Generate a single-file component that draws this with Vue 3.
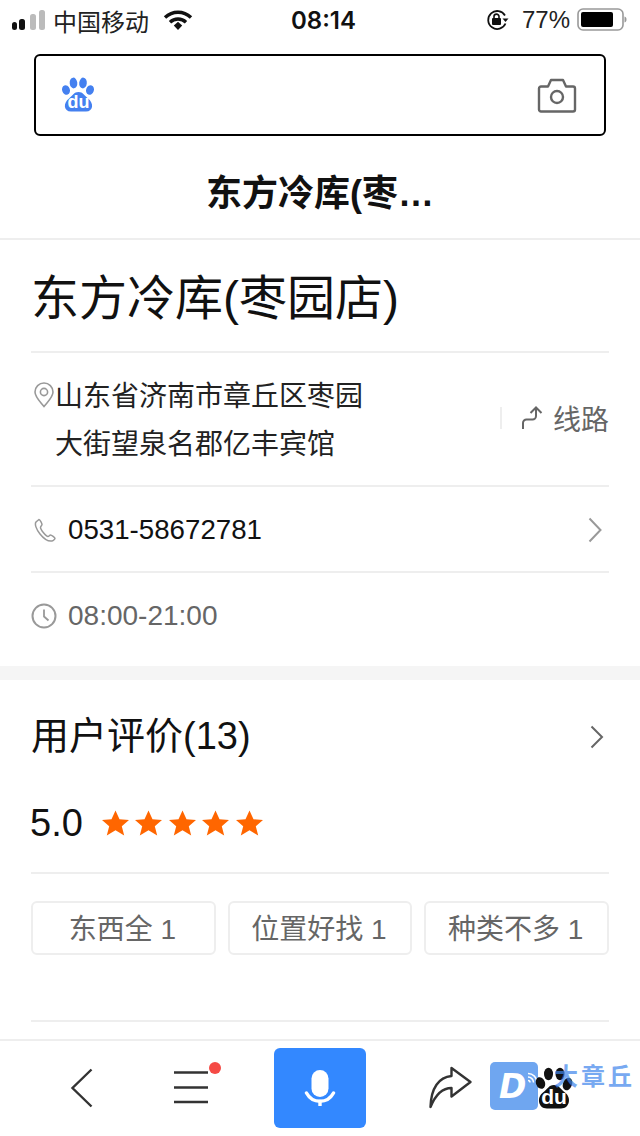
<script setup>
const tags = ['东西全 1', '位置好找 1', '种类不多 1']
const stars = [1, 2, 3, 4, 5]
</script>

<template>
  <div class="page">
    <header class="status">
      <div class="st-left">
        <svg class="signal" width="34" height="22" viewBox="0 0 34 22">
          <rect x="0" y="12" width="5" height="8" rx="2.5" fill="#111" />
          <rect x="7" y="9" width="6" height="11" rx="2.5" fill="#111" />
          <rect x="18" y="4" width="6" height="16" rx="2.5" fill="#bbb" />
          <rect x="27" y="0" width="6" height="20" rx="2.5" fill="#bbb" />
        </svg>
        <span class="carrier">中国移动</span>
        <svg class="wifi" width="30" height="20" viewBox="0 0 30 20">
          <path d="M2 7.5C9.5 0.5 20.5 0.5 28 7.5" fill="none" stroke="#111" stroke-width="3.4" />
          <path d="M7 12.2C11.5 8 18.5 8 23 12.2" fill="none" stroke="#111" stroke-width="3.4" />
          <path d="M10.8 15.4 15 11.8 19.2 15.4 15 20Z" fill="#111" />
        </svg>
      </div>
      <div class="time">08:14</div>
      <div class="st-right">
        <svg width="24" height="22" viewBox="0 0 24 22">
          <path d="M19.5 14.5A9 9 0 1 1 19 6.5" fill="none" stroke="#111" stroke-width="1.8" />
          <path d="M16.5 9.5h6l-3 3.6Z" fill="#111" />
          <rect x="6" y="9" width="9" height="7" rx="1" fill="#111" />
          <path d="M8 9.5V7.6a2.5 2.5 0 0 1 5 0V9.5" fill="none" stroke="#111" stroke-width="1.6" />
        </svg>
        <span class="pct">77%</span>
        <svg width="50" height="24" viewBox="0 0 50 24">
          <rect x="1" y="1" width="45" height="21" rx="5" fill="none" stroke="#999" stroke-width="1.6" />
          <rect x="4" y="4" width="32" height="15" rx="2" fill="#000" />
          <path d="M47.5 8.5c1.6.6 2 1.6 2 3s-.4 2.4-2 3Z" fill="#999" />
        </svg>
      </div>
    </header>

    <div class="search">
      <svg width="36" height="38" viewBox="0 0 36 38">
        <ellipse cx="13.5" cy="7" rx="3.8" ry="5.4" fill="#4480f0" transform="rotate(-6 13.5 7)" />
        <ellipse cx="23" cy="7" rx="3.8" ry="5.4" fill="#4480f0" transform="rotate(6 23 7)" />
        <ellipse cx="6" cy="14" rx="3.9" ry="4.8" fill="#4480f0" transform="rotate(-20 6 14)" />
        <ellipse cx="30" cy="14" rx="3.9" ry="4.8" fill="#4480f0" transform="rotate(20 30 14)" />
        <path d="M18.500 16C14 16 12.500 19.500 9 22.500 3 27 3.500 35.500 11 35.500h15c7.500 0 8-8.500 2-13C24.500 19.500 23 16 18.500 16Z" fill="#4480f0" />
        <text x="18.500" y="32" text-anchor="middle" class="du">du</text>
      </svg>
      <svg width="40" height="36" viewBox="0 0 40 36">
        <path d="M2 11.500a2 2 0 0 1 2-2h7l3-6.500h12l3 6.500h7a2 2 0 0 1 2 2v21a2 2 0 0 1-2 2H4a2 2 0 0 1-2-2Z" fill="none" stroke="#666" stroke-width="2.400" stroke-linejoin="round" />
        <circle cx="20" cy="20" r="6" fill="none" stroke="#666" stroke-width="2.400" />
      </svg>
    </div>

    <div class="title">东方冷库(枣…</div>

    <main class="main">
      <section class="info">
        <h1 class="name">东方冷库(枣园店)</h1>
        <div class="addr-row">
          <svg class="pin" width="20" height="26" viewBox="0 0 20 26">
            <path d="M10 24.500C6 19.500 1 15 1 10a9 9 0 0 1 18 0C19 15 14 19.500 10 24.500Z" fill="none" stroke="#999" stroke-width="1.600" />
            <circle cx="10" cy="10" r="3.600" fill="none" stroke="#999" stroke-width="1.600" />
          </svg>
          <div class="addr">山东省济南市章丘区枣园<br />大街望泉名郡亿丰宾馆</div>
          <div class="route">
            <i class="vline"></i>
            <svg width="24" height="24" viewBox="0 0 24 24">
              <path d="M3 23v-6a3.500 3.500 0 0 1 3.500-3.500h6a3.500 3.500 0 0 0 3.500-3.500V2M10.500 7 16 1.500 21.500 7" fill="none" stroke="#666" stroke-width="2" />
            </svg>
            <span>线路</span>
          </div>
        </div>
        <div class="row">
          <svg class="ico" width="22" height="24" viewBox="0 0 22 24">
            <path d="M5 1.500 2 4C0.500 6 2 11 6 16s9 7.500 12 7c1.500-.3 3-2 3-2.500 0-.8-3.500-3.500-4.500-3.500-1 0-1.500 1.500-2.500 1.500-2 0-7.500-7-7.500-9C6.500 8 8 7.500 8 6.500 8 5.500 6 1.500 5 1.500Z" fill="none" stroke="#999" stroke-width="1.500" />
          </svg>
          <span class="phone">0531-58672781</span>
          <svg class="chev" width="14" height="26" viewBox="0 0 14 26">
            <path d="M1.500 1.500 12.500 13 1.500 24.500" fill="none" stroke="#999" stroke-width="2" />
          </svg>
        </div>
        <div class="row last">
          <svg class="clock" width="26" height="26" viewBox="0 0 26 26">
            <circle cx="13" cy="13" r="11.500" fill="none" stroke="#999" stroke-width="2" />
            <path d="M13 6.500v7l4.500 4" fill="none" stroke="#999" stroke-width="1.800" />
          </svg>
          <span class="hours">08:00-21:00</span>
        </div>
      </section>

      <section class="reviews">
        <div class="rev-head">
          <span>用户评价(13)</span>
          <svg class="rev-chev" width="14" height="24" viewBox="0 0 14 24">
            <path d="M1.500 1.500 12 12 1.500 22.500" fill="none" stroke="#666" stroke-width="2" />
          </svg>
        </div>
        <div class="score">
          <span class="num">5.0</span>
          <div class="stars">
            <svg v-for="s in stars" :key="s" width="27" height="26" viewBox="0 0 27 26">
              <path d="M13.500 0.500 17.500 9.300 27 10 19.800 16.300 22.200 25.600 13.500 20.200 4.800 25.600 7.200 16.300 0 10 9.500 9.300Z" fill="#ff6600" />
            </svg>
          </div>
        </div>
        <div class="tags">
          <div v-for="t in tags" :key="t" class="tag">{{ t }}</div>
        </div>
      </section>
    </main>

    <nav class="bar">
      <svg width="24" height="40" viewBox="0 0 24 40">
        <path d="M21.500 1.500 2.500 20 21.500 38.500" fill="none" stroke="#333" stroke-width="2.400" />
      </svg>
      <div class="menu">
        <svg width="36" height="34" viewBox="0 0 36 34">
          <path d="M1 2.500h34M1 17.500h34M1 32h34" fill="none" stroke="#333" stroke-width="2.400" />
        </svg>
        <i class="dot"></i>
      </div>
      <button class="mic">
        <svg width="32" height="36" viewBox="0 0 32 36">
          <rect x="7.500" y="0" width="17" height="27" rx="8.500" fill="#fff" />
          <path d="M2.500 23c3 5.500 8 8.300 13.500 8.300S26.500 28.500 29.500 23M16 31v5" fill="none" stroke="#fff" stroke-width="3.400" stroke-linecap="round" />
        </svg>
      </button>
      <svg class="share" width="44" height="44" viewBox="0 0 44 44">
        <path d="M22.500 2 41.500 16 22.500 30.500V22C12 22 6 30 1.500 41 2 22 10 11 22.500 10Z" fill="none" stroke="#333" stroke-width="2.400" stroke-linejoin="round" />
      </svg>
    </nav>

    <div class="wm">
      <div class="wm-d">
        <span>D</span>
        <svg class="waves" width="11" height="12" viewBox="0 0 11 12">
          <path d="M1 8.500a2 2 0 0 1 2 2M1 5a5.500 5.500 0 0 1 5.500 5.500M1 1.500a9 9 0 0 1 9 9" fill="none" stroke="#fff" stroke-width="1.500" />
        </svg>
      </div>
      <svg class="wm-paw" width="38" height="44" viewBox="0 0 38 44">
        <ellipse cx="13.500" cy="7" rx="4.500" ry="6.200" fill="#111" />
        <ellipse cx="25" cy="7" rx="4.500" ry="6.200" fill="#111" />
        <ellipse cx="5.500" cy="16" rx="4.500" ry="6" fill="#111" transform="rotate(-20 5.500 16)" />
        <ellipse cx="32.500" cy="17" rx="4.500" ry="6.500" fill="#111" transform="rotate(20 32.500 17)" />
        <path d="M19 18C13.500 18 12.500 22.500 8 25.500 1.500 30 3 41.500 12 41.500h14c9 0 10.500-11.500 4-16C25.500 22.500 24.500 18 19 18Z" fill="#111" />
        <text x="19" y="37" text-anchor="middle" class="du big">du</text>
      </svg>
      <div class="wm-text">大章丘</div>
    </div>
  </div>
</template>

<style scoped>
.page {
  position: relative;
  width: 640px;
  height: 1136px;
  overflow: hidden;
  background: #fff;
  display: flex;
  flex-direction: column;
  font-family: "Liberation Sans", "Noto Sans CJK SC", sans-serif;
  color: #000;
}
.status {
  height: 40px;
  display: grid;
  grid-template-columns: 279px auto 1fr;
  align-items: center;
  padding: 0 13px 0 12px;
  flex: none;
}
.st-left, .st-right { display: flex; align-items: center; }
.st-right { justify-content: flex-end; }
.signal { margin-top: 1px; flex: none; }
.carrier { font-size: 24px; margin-left: 7px; color: #222; }
.wifi { margin-left: 14px; }
.time { font-family: Inter, "Liberation Sans", sans-serif; font-size: 24px; font-weight: 600; color: #111; }
.pct { font-size: 24px; margin: 0 7px 0 12px; color: #222; }
.search {
  flex: none;
  box-sizing: border-box;
  height: 82px;
  margin: 14px 34px 0;
  border: 2px solid #000;
  border-radius: 6px;
  display: flex;
  align-items: center;
  justify-content: space-between;
  padding: 0 27px 0 24px;
}
.du { font: 700 18px "Liberation Sans", sans-serif; fill: #fff; }
.du.big { font-size: 21px; }
.title {
  flex: none;
  box-sizing: border-box;
  height: 104px;
  padding-top: 35px;
  border-bottom: 2px solid #eee;
  text-align: center;
  font-size: 36px;
  line-height: 46px;
  font-weight: 700;
  color: #111;
}
.main { flex: 1; min-height: 0; }
.info { padding: 0 31px; }
.name {
  margin: 0;
  height: 113px;
  box-sizing: border-box;
  padding-top: 29px;
  font-size: 48px;
  line-height: 60px;
  font-weight: 400;
  border-bottom: 2px solid #eee;
  color: #111;
}
.addr-row {
  height: 134px;
  box-sizing: border-box;
  display: flex;
  align-items: center;
  position: relative;
  border-bottom: 2px solid #eee;
}
.pin { flex: none; margin: -48px 1px 0 3px; }
.addr { flex: 1; font-size: 28px; line-height: 48px; margin-top: 3px; color: #222; }
.route {
  display: flex;
  align-items: center;
  font-size: 28px;
  color: #666;
  margin-top: -2px;
}
.vline { width: 2px; height: 22px; background: #eee; margin-right: 18px; }
.route span { margin-left: 9px; }
.row {
  height: 86px;
  box-sizing: border-box;
  display: flex;
  align-items: center;
  padding-top: 2px;
  border-bottom: 2px solid #eee;
  font-size: 28px;
}
.row.last { border-bottom: 0; height: 93px; padding: 0 0 8px; }
.ico { margin: 0 12px 0 3px; flex: none; }
.phone { flex: 1; color: #111; font-size: 27.7px; }
.chev { margin-right: 7px; }
.clock { margin: 0 11px 0 0; flex: none; }
.hours { color: #666; }
.reviews {
  border-top: 14px solid #f5f5f5;
  padding: 0 31px;
}
.rev-head {
  height: 112px;
  display: flex;
  align-items: center;
  justify-content: space-between;
  font-size: 38px;
  color: #111;
  padding: 0 5px 8px 0;
  box-sizing: border-box;
}
.rev-chev { margin-top: 10px; }
.score {
  height: 82px;
  box-sizing: border-box;
  display: flex;
  align-items: center;
  gap: 19px;
  padding-bottom: 18px;
  border-bottom: 2px solid #eee;
}
.num { font-size: 38px; color: #111; margin-left: -1px; }
.stars { display: flex; gap: 6.500px; }
.tags {
  display: flex;
  gap: 12px;
  padding: 27px 0 65px;
  border-bottom: 2px solid #eee;
}
.tag {
  flex: 1 1 0;
  height: 54px;
  box-sizing: border-box;
  border: 2px solid #eee;
  border-radius: 6px;
  display: flex;
  align-items: center;
  justify-content: center;
  padding: 0 2px 3px 0;
  font-size: 28px;
  color: #666;
}
.bar {
  flex: none;
  height: 97px;
  box-sizing: border-box;
  border-top: 2px solid #eee;
  position: relative;
  display: flex;
  align-items: center;
  padding: 0 0 1px 70px;
}
.menu { position: relative; margin: -2px 0 0 79px; width: 36px; height: 34px; }
.dot {
  position: absolute;
  right: -12px;
  top: -8px;
  width: 12px;
  height: 12px;
  border-radius: 50%;
  background: #f54a45;
}
.mic {
  margin-left: 65px;
  width: 92px;
  height: 80px;
  border: 0;
  padding: 0;
  border-radius: 6px;
  background: #3388ff;
  display: flex;
  align-items: center;
  justify-content: center;
}
.share { margin-left: 63px; }
.wm { position: absolute; left: 490px; top: 1062px; width: 146px; height: 50px; }
.wm-d {
  position: absolute;
  left: 0;
  top: 0;
  width: 48px;
  height: 48px;
  border-radius: 5px;
  background: #6fa6f0;
  color: #fff;
  font-family: "DejaVu Sans", sans-serif;
  font-size: 33px;
  font-weight: 700;
  font-style: italic;
  line-height: 48px;
}
.wm-d span { position: absolute; left: 9px; top: 1px; }
.waves { position: absolute; left: 37px; top: 10px; }
.wm-paw { position: absolute; left: 45px; top: 5px; }
.wm-text {
  position: absolute;
  left: 64px;
  top: 0;
  font-size: 24px;
  letter-spacing: 3px;
  line-height: 30px;
  font-weight: 700;
  color: #3f86ec;
  opacity: 0.7;
  white-space: nowrap;
}
</style>
